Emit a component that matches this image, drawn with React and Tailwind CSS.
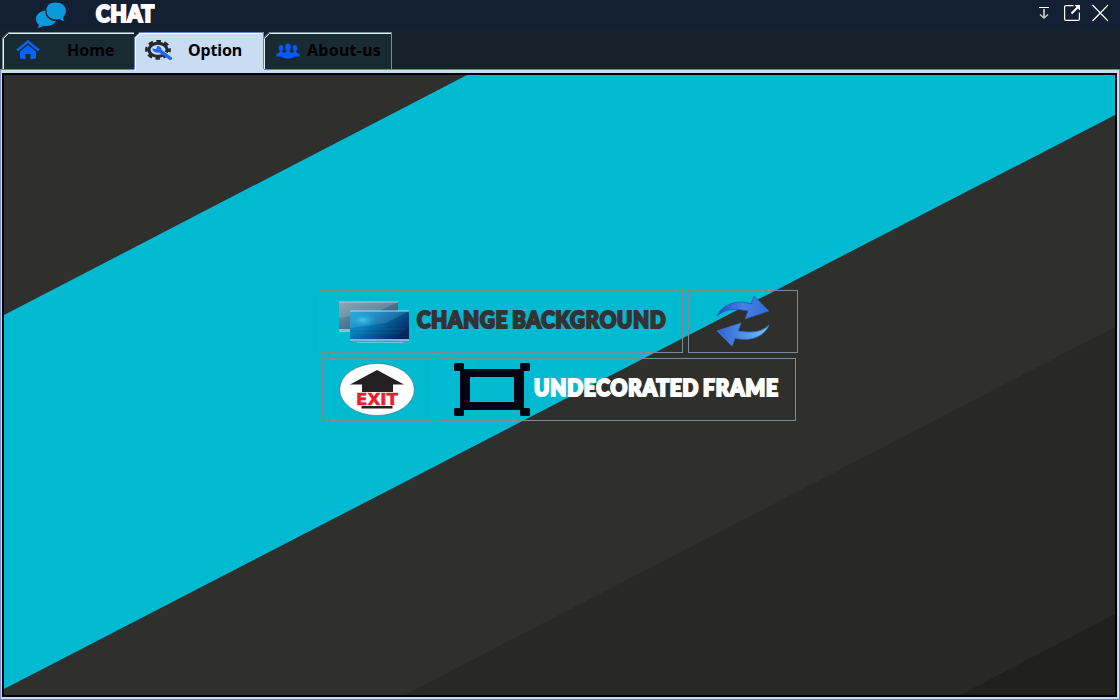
import React from "react";

function ChatLogo() {
  return (
    <svg className="h-[26px] w-[31px]" viewBox="0 0 31 26">
      <g fill="#0799dc">
        <path d="M9.500 8.500C4 9 0 12.500 0 17c0 2.500 1.200 4.500 3 6-.2 1.300-.8 2-1.500 2.600 2.500.2 4.500-.6 6-1.800 5.800.8 10.500-1.200 12.500-4.800-6.200 0-11.300-4.500-10.500-10.500z" />
        <path d="M19.500 .5C13.500 .5 10.300 4 10.300 8.800c0 5 4 8.700 9.700 8.700 1.200 0 2.300-.1 3.400-.5 1.400 1.200 3.200 2 5.300 1.800-1-.9-1.500-2-1.600-3.400C28.700 13.700 29.900 11.500 29.900 9 29.900 3.800 25.500 .5 19.500 .5z" />
        <path d="M10 8.200c-.5 6 4.500 10.500 11 10.200" fill="none" stroke="#131f32" strokeWidth="1" />
      </g>
    </svg>
  );
}

function HomeIcon() {
  return (
    <svg className="h-[20px] w-[24px]" viewBox="0 0 24 20" fill="#0763f5">
      <path d="M1 10.500 12 1.500l11 9" fill="none" stroke="#0763f5" strokeWidth="2.500" />
      <path d="M4 11.500 12 5l8 6.500V17.500q0 1.500-1.500 1.500h-4V14h-5v5h-4Q4 19 4 17.500z" />
    </svg>
  );
}

function OptionIcon() {
  return (
    <svg className="h-[22px] w-[30px]" viewBox="0 0 30 22">
      <ellipse cx="14" cy="9.800" rx="9" ry="6.500" fill="none" stroke="#252a2d" strokeWidth="3" />
      <ellipse cx="14" cy="9.800" rx="11.500" ry="8.500" fill="none" stroke="#252a2d" strokeWidth="2.800" strokeDasharray="4.600 3.350" strokeDashoffset="2.300" />
      <path d="m20 13 5 3.500" stroke="#c8ddf2" strokeWidth="3.500" />
      <path d="M8.500 8.300c1.500 1 3 1 4 .2.900-.8.800-1.700 0-2.500 3 0 5.200 1.300 5 3.800L27.800 17.500c1 1.500-.6 3-2.300 2.300L15 12.500C11.500 13.200 8.200 11.300 8.500 8.300z" fill="#2463f7" />
    </svg>
  );
}

function PeopleIcon() {
  return (
    <svg className="h-[16px] w-[24px]" viewBox="0 0 24 16" fill="#0759fb">
      <ellipse cx="5" cy="5" rx="2.300" ry="3" />
      <ellipse cx="19" cy="5" rx="2.300" ry="3" />
      <path d="M3.800 7h2.500v2.200L8 10l-2 3.500H.5C0 11.500.5 10.300 3.800 9.200zM17.700 7h2.500v2.200c3.300 1.100 3.800 2.300 3.300 4.300H18L16 10l1.700-.8z" />
      <ellipse cx="12" cy="4" rx="2.800" ry="3.700" />
      <path d="M10.300 6h3.400v3c4 1 5 2 5 4.500-2 2.800-11.400 2.800-13.400 0C5.300 11 6.300 10 10.300 9z" />
    </svg>
  );
}

function ScreensIcon() {
  return (
    <svg className="h-[42px] w-[71px] shrink-0" viewBox="0 0 71 42">
      <defs>
        <linearGradient id="rear" x2="1" y2="1"><stop stopColor="#7d9dac" /><stop offset=".45" stopColor="#4c7892" /><stop offset="1" stopColor="#263f61" /></linearGradient>
        <linearGradient id="front" x2="1" y2=".65"><stop stopColor="#16a5d4" /><stop offset=".4" stopColor="#087ab7" /><stop offset="1" stopColor="#02275a" /></linearGradient>
        <radialGradient id="glow"><stop stopColor="#26c4ec" /><stop offset="1" stopColor="#1494c8" stopOpacity="0" /></radialGradient>
      </defs>
      <path d="M0 1h59v30H0z" fill="url(#rear)" />
      <path d="M0 28h12v3H0z" fill="#9ab9ce" />
      <path d="M0 1h59L40 10 0 17z" fill="#b8c6d3" opacity=".25" />
      <path d="M0 1h59" stroke="#b1d0d7" />
      <path d="M11 10h59v30H11z" fill="url(#front)" />
      <ellipse cx="24" cy="19" rx="13" ry="7" fill="url(#glow)" />
      <path d="M11 10h59L47 22l-36 5z" fill="#a8dcff" opacity=".17" />
      <path d="M14 28h52M12 32h50M20 25h28" fill="none" stroke="#22afe0" opacity=".2" />
      <path d="M11 38h59v2H11z" fill="#76b9e5" />
      <path d="M11 10h59" stroke="#9ce1f1" />
      <path d="M18 41.500h46" stroke="#55d0e2" />
    </svg>
  );
}

function RefreshIcon() {
  return (
    <svg className="h-[52px] w-[54px]" viewBox="0 0 54 52">
      <defs>
        <linearGradient id="arrowTop" x2="1"><stop stopColor="#244bc2" /><stop offset=".5" stopColor="#4a7fe4" /><stop offset="1" stopColor="#326bd0" /></linearGradient>
        <linearGradient id="arrowBottom" x2="1"><stop stopColor="#3263d1" /><stop offset=".45" stopColor="#4989e7" /><stop offset="1" stopColor="#75c8ff" /></linearGradient>
      </defs>
      <path d="M1 21C6 10 20 4 35 9l3-8 15 15-24 8 3-8C19 13 9 14 1 21z" fill="url(#arrowTop)" stroke="#285bc4" strokeWidth=".8" />
      <path d="M53 30C48 42 34 47 19 43l-3 8L1 36l24-8-3 8c13 2 23 2 31-6z" fill="url(#arrowBottom)" stroke="#3974c8" strokeWidth=".8" />
    </svg>
  );
}

function ExitIcon() {
  return (
    <svg className="h-[54px] w-[76px]" viewBox="0 0 76 54">
      <ellipse cx="38" cy="26.500" rx="37.300" ry="26" fill="#fff" stroke="#526f77" strokeWidth=".6" />
      <path d="M38 7 11 21.500h12V29h31v-7.500h11zM22.500 43h31v2.500h-31z" fill="#242021" />
      <text x="17" y="41.500" textLength="42" lengthAdjust="spacingAndGlyphs" className="fill-[#ed1c2e] stroke-[#ed1c2e] stroke-[.5px] font-['DejaVu_Sans',sans-serif] text-[15px] font-bold">EXIT</text>
    </svg>
  );
}

function FrameIcon() {
  return (
    <svg className="h-[53px] w-[76px] shrink-0" viewBox="0 0 76 53" fill="#020312">
      <path fillRule="evenodd" d="M6 6h64v41H6zM16 14v25h44V14z" />
      <path d="M1 0h8l1 1v6L9 8H1L0 7V1zM67 0h8l1 1v6l-1 1h-8l-1-1V1zM1 45h8l1 1v6l-1 1H1l-1-1v-6zM67 45h8l1 1v6l-1 1h-8l-1-1v-6z" />
    </svg>
  );
}

function TabEdge({ width }) {
  return (
    <svg className="absolute inset-0 h-full w-full" viewBox={`0 0 ${width} 37`} fill="none" preserveAspectRatio="none">
      <path d="M0 0h7L0 7z" fill="#15222b" />
      <path d={`M.5 37V6L6 .5H${width - 0.5}V37`} stroke="#7a8a99" />
      <path d={`M1.500 37V6.500L6.500 1.500H${width - 1}`} stroke="#e6f2f1" />
    </svg>
  );
}

function Wallpaper() {
  return (
    <svg className="absolute inset-0 h-full w-full" viewBox="4 75 1111 620" preserveAspectRatio="none">
      <path fill="#2f2f2d" d="M4 75h1111v620H4z" />
      <path fill="#00bad2" d="M467 75h648v40L4 689V315z" />
      <path fill="#282826" d="M1115 327v368H405z" />
      <path fill="#20201f" d="M1115 614v81H960z" />
    </svg>
  );
}

const tabFont = "font-['Noto_Sans',sans-serif] text-[16px] leading-[20px] font-bold text-black";
const displayFont = "block whitespace-nowrap font-['Lato',sans-serif] font-black";

export default function App() {
  return (
    <div className="flex h-[700px] w-[1120px] flex-col overflow-hidden bg-[#15222b]">
      <header className="flex h-[30px] shrink-0 items-start justify-between bg-[#131f32]">
        <div className="flex pl-[36px]">
          <div className="pt-[2px]"><ChatLogo /></div>
          <h1 className={`${displayFont} ml-[29px] w-[62px] text-[22px] leading-[28px] text-white`}>
            <span className="inline-block origin-left scale-x-[.95] tracking-[.8px] [-webkit-text-stroke:2.2px_white]">CHAT</span>
          </h1>
        </div>
        <div className="flex gap-[11px] pr-[11px] pt-[4px] text-white">
          <svg className="h-[18px] w-[17px]" viewBox="0 0 17 18" fill="none"><path d="M4 3.500h10" stroke="white" /><path d="M9 5v8" stroke="#aeb3bb" strokeWidth="2" /><path d="m5 10.500 4 3.500 4-3.500" stroke="#c1c5ca" strokeWidth="1.500" /></svg>
          <svg className="h-[18px] w-[18px]" viewBox="0 0 18 18" fill="none" stroke="white" strokeWidth="1.200"><path d="M10.500 1.600H3Q1.600 1.600 1.600 3v12q0 1.400 1.400 1.400h12q1.400 0 1.400-1.400V8.500" /><path d="m8.500 9.500 7-7" strokeWidth="2" /><path d="M11.500 1h5.500v5.500z" fill="white" stroke="none" /></svg>
          <svg className="h-[18px] w-[17px]" viewBox="0 0 17 18" fill="none" stroke="white" strokeWidth="1.200"><path d="m.5 1 15.500 16m0-16-15.500 16" /></svg>
        </div>
      </header>
      <nav className="flex h-[39px] shrink-0 pl-[2px] pt-[2px]">
        <div className="relative flex w-[133px] bg-[#1a2a33] pl-[14px] pt-[8px]">
          <TabEdge width={133} />
          <div className="relative flex"><HomeIcon /><span className={`${tabFont} ml-[27px]`}>Home</span></div>
        </div>
        <div className="relative z-10 -mb-[2px] -ml-px flex w-[130px] bg-[#c8ddf2] pl-[10px] pt-[8px]">
          <svg className="absolute inset-0 h-full w-full" viewBox="0 0 130 39" fill="none"><path d="M0 0h6L0 6z" fill="#15222b" /><path d="M.5 37V5.500L5.500.5h124V37" stroke="#6382bf" /><path d="M1.500 39V6.500l5-5H128" stroke="white" /></svg>
          <div className="relative flex"><OptionIcon /><span className={`${tabFont} ml-[14px] tracking-[-.15px]`}>Option</span></div>
        </div>
        <div className="relative -ml-px flex w-[129px] bg-[#1a2a33] pl-[13px] pt-[8px]">
          <TabEdge width={129} />
          <div className="relative flex"><span className="pt-[3px]"><PeopleIcon /></span><span className={`${tabFont} ml-[7px] tracking-[.25px]`}>About-us</span></div>
        </div>
      </nav>
      <main className="flex min-h-0 flex-1 border border-[#6382bf] border-l-[#7b91c7] border-r-[#7a8a99] bg-[#c8ddf2]">
        <div className="flex flex-1 border-b-2 border-l border-r-2 border-t-[3px] border-[#c8ddf2]">
          <section className="relative flex flex-1 flex-col items-start overflow-hidden border-2 border-black pl-[315px] pt-[215px]">
            <Wallpaper />
            <div className="relative flex gap-[5px]">
              <button className="flex h-[63px] w-[364px] items-center border border-[#7a8a99] pl-[19px]">
                <ScreensIcon />
                <span className={`${displayFont} ml-[7px] mt-[-3px] w-[251px] text-left text-[22px] leading-[28px] text-[#333]`}><span className="inline-block origin-left scale-x-[.93] tracking-[.95px] [word-spacing:-2px] [-webkit-text-stroke:2.2px_#333]">CHANGE BACKGROUND</span></span>
              </button>
              <button className="flex h-[63px] w-[110px] justify-center border border-[#7a8a99] pt-[4px]"><RefreshIcon /></button>
            </div>
            <div className="relative mt-[5px] flex gap-[5px] pl-[3px]">
              <button className="flex h-[63px] w-[110px] justify-center border border-[#7a8a99] pt-[4px]"><ExitIcon /></button>
              <button className="flex h-[63px] w-[359px] items-start border border-[#7a8a99] pl-[16px] pt-[4px]">
                <FrameIcon />
                <span className={`${displayFont} ml-[4px] mt-[11px] w-[246px] text-left text-[22px] leading-[28px] text-white`}><span className="inline-block origin-left scale-x-[.94] tracking-[.95px] [word-spacing:-2px] [-webkit-text-stroke:2.2px_white]">UNDECORATED FRAME</span></span>
              </button>
            </div>
          </section>
        </div>
      </main>
    </div>
  );
}
